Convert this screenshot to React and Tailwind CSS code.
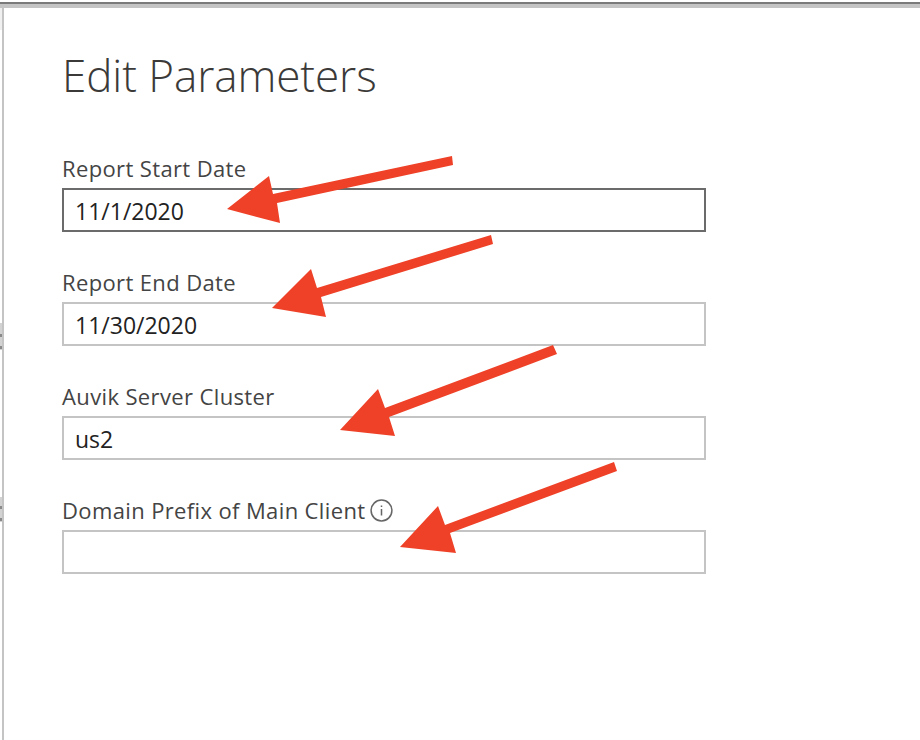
const fields = [
  { label: "Report Start Date", value: "11/1/2020", active: true },
  { label: "Report End Date", value: "11/30/2020" },
  { label: "Auvik Server Cluster", value: "us2" },
  { label: "Domain Prefix of Main Client", value: "", info: true },
];

const arrows = [
  "452,156 453,165 277,203 280,223 227,209 269,176 273,194",
  "491,235 493,244 321,297 326,317 272,308 311,269 317,288",
  "553,345 557,354 389,417 395,436 340,430 378,389 385,408",
  "614,462 617,471 450,533 456,553 400,547 438,506 445,525",
];

const InfoIcon = () => (
  <svg width="23" height="23" viewBox="0 0 23 23" fill="none" className="ml-[5px]">
    <circle cx="11.5" cy="11.5" r="10.4" stroke="#666" strokeWidth="1.5" />
    <path d="M11.5 10v6.5M11.5 6.5v1.6" stroke="#666" strokeWidth="1.5" />
  </svg>
);

const App = () => {
  return (
    <div className="relative w-[920px] h-[740px] overflow-hidden bg-white font-['Open_Sans',sans-serif]">
      <div className="h-[2px] bg-white" />
      <div className="h-[2px] bg-[#7a7a7a]" />
      <div className="h-[4px] bg-[#c4c4c4]" />

      <div className="ml-[2px] h-[732px] border-l-2 border-[#c4c4c4] pl-[58px]">
        <h1 className="pt-[38px] h-[149px] text-[44px] leading-[58px] tracking-[-0.07px] font-light text-[#3b3a39]">
          Edit Parameters
        </h1>

        <div className="flex flex-col gap-[39px] w-[644px]">
          {fields.map((field) => (
            <div key={field.label}>
              <div className="flex items-center h-[31px] pb-[8px] text-[22px] tracking-[0.37px] text-[#444]">
                {field.label}
                {field.info && <InfoIcon />}
              </div>
              <div
                className={`h-[44px] border-2 pl-[11px] pt-[2px] flex items-center text-[23px] text-[#222] ${
                  field.active ? "border-[#6b6b6b]" : "border-[#c4c4c4]"
                }`}
              >
                {field.value}
              </div>
            </div>
          ))}
        </div>
      </div>

      {/* bits of the window behind, at the left edge */}
      <div className="absolute left-0 top-[8px] w-[2px] h-[22px] bg-[#f0f0f0]" />
      <div className="absolute left-0 top-[323px] w-[2px] h-[27px] bg-[#d2d2d2]">
        <div className="mt-[11px] h-[3px] bg-[#8a8a8a]" />
        <div className="mt-[9px] h-[3px] bg-[#8a8a8a]" />
      </div>
      <div className="absolute left-0 top-[497px] w-[2px] h-[25px] bg-[#d2d2d2]">
        <div className="mt-[9px] h-[3px] bg-[#8a8a8a]" />
        <div className="mt-[9px] h-[3px] bg-[#8a8a8a]" />
      </div>

      <svg width="920" height="740" viewBox="0 0 920 740" className="absolute inset-0">
        {arrows.map((points) => (
          <polygon key={points} points={points} fill="#ee4127" />
        ))}
      </svg>
    </div>
  );
};

export default App;
